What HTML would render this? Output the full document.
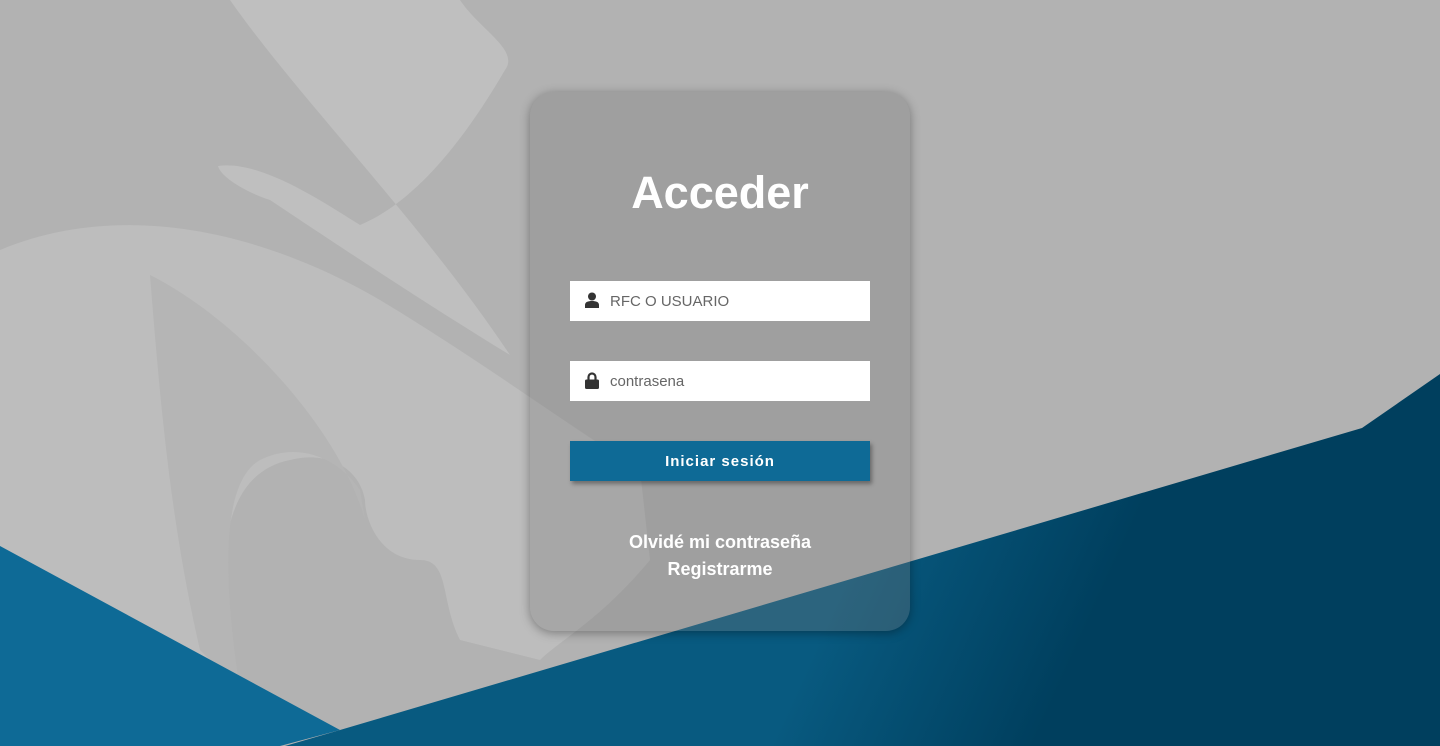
<!DOCTYPE html>
<html><head><meta charset="utf-8"><style>
html,body{margin:0;padding:0;width:1440px;height:746px;overflow:hidden;font-family:"Liberation Sans",sans-serif;background:#b2b2b2}
svg.bg{position:absolute;left:0;top:0}
.card{position:absolute;left:530px;top:92px;width:380px;height:539px;border-radius:24px;background:rgba(120,120,120,0.32);box-shadow:0 2px 10px rgba(0,0,0,0.35)}
h1{position:absolute;left:0;width:380px;top:78px;margin:0;text-align:center;color:#fff;font-size:45px;font-weight:bold;line-height:46px}
.in{position:absolute;left:570px;width:300px;height:40px;background:#fff;font-size:15px;color:#666}
.in span{position:absolute;left:40px;top:12px}
.in svg{position:absolute;left:15px;top:11px}
.btn{position:absolute;left:570px;top:441px;width:300px;height:40px;background:#0e6a96;color:#fff;font-weight:bold;font-size:15px;letter-spacing:1px;text-align:center;line-height:41px;box-shadow:2px 3px 4px rgba(0,0,0,0.35)}
.lk{position:absolute;left:530px;width:380px;text-align:center;color:#fff;font-weight:bold;font-size:18px}
</style></head><body>
<svg class="bg" width="1440" height="746" viewBox="0 0 1440 746">
<path d="M230 0 C300 100 420 220 510 355 C420 300 330 240 270 200 C240 190 220 175 218 166 C260 160 320 200 360 225 C420 200 470 130 505 70 C520 50 480 30 460 0 Z" fill="#bfbfbf"/>
<path d="M0 250 C120 200 260 230 380 300 C480 360 560 420 640 470 L650 560 C600 620 560 640 540 660 L460 640 C440 600 450 560 420 560 C380 560 365 520 365 500 C360 470 330 450 290 460 C240 470 220 520 225 600 L240 700 L0 546 Z" fill="#bdbdbd"/>
<path d="M150 275 C160 400 170 520 200 650 L240 690 C220 560 225 480 260 460 C300 440 340 460 360 490 L365 520 C340 430 240 320 150 275 Z" fill="#b5b5b5"/>
<path d="M0 546 L340 730 L280 746 L0 746 Z" fill="#0e6a96"/>
<defs><linearGradient id="g" x1="880" y1="500" x2="1100" y2="600" gradientUnits="userSpaceOnUse"><stop offset="0" stop-color="#085a80"/><stop offset="1" stop-color="#003f5e"/></linearGradient></defs>
<path d="M285 746 L340 730 L1362 428 L1440 374 L1440 746 Z" fill="url(#g)"/>
</svg>
<div class="card"><h1>Acceder</h1></div>
<div class="in" style="top:281px"><svg width="14" height="16" viewBox="0 0 14 16"><circle cx="7" cy="4.5" r="4" fill="#333"/><path d="M0 16 V13 C0 10 3 9 7 9 C11 9 14 10 14 13 V16 Z" fill="#333"/></svg><span>RFC O USUARIO</span></div>
<div class="in" style="top:361px"><svg width="14" height="17" viewBox="0 0 14 17"><path d="M3.5 8 V5 A3.5 3.5 0 0 1 10.5 5 V8" stroke="#333" stroke-width="2.2" fill="none"/><rect x="0" y="7.5" width="14" height="9.5" rx="1.5" fill="#333"/></svg><span>contrasena</span></div>
<div class="btn">Iniciar sesión</div>
<div class="lk" style="top:532px">Olvidé mi contraseña</div>
<div class="lk" style="top:559px">Registrarme</div>
</body></html>
